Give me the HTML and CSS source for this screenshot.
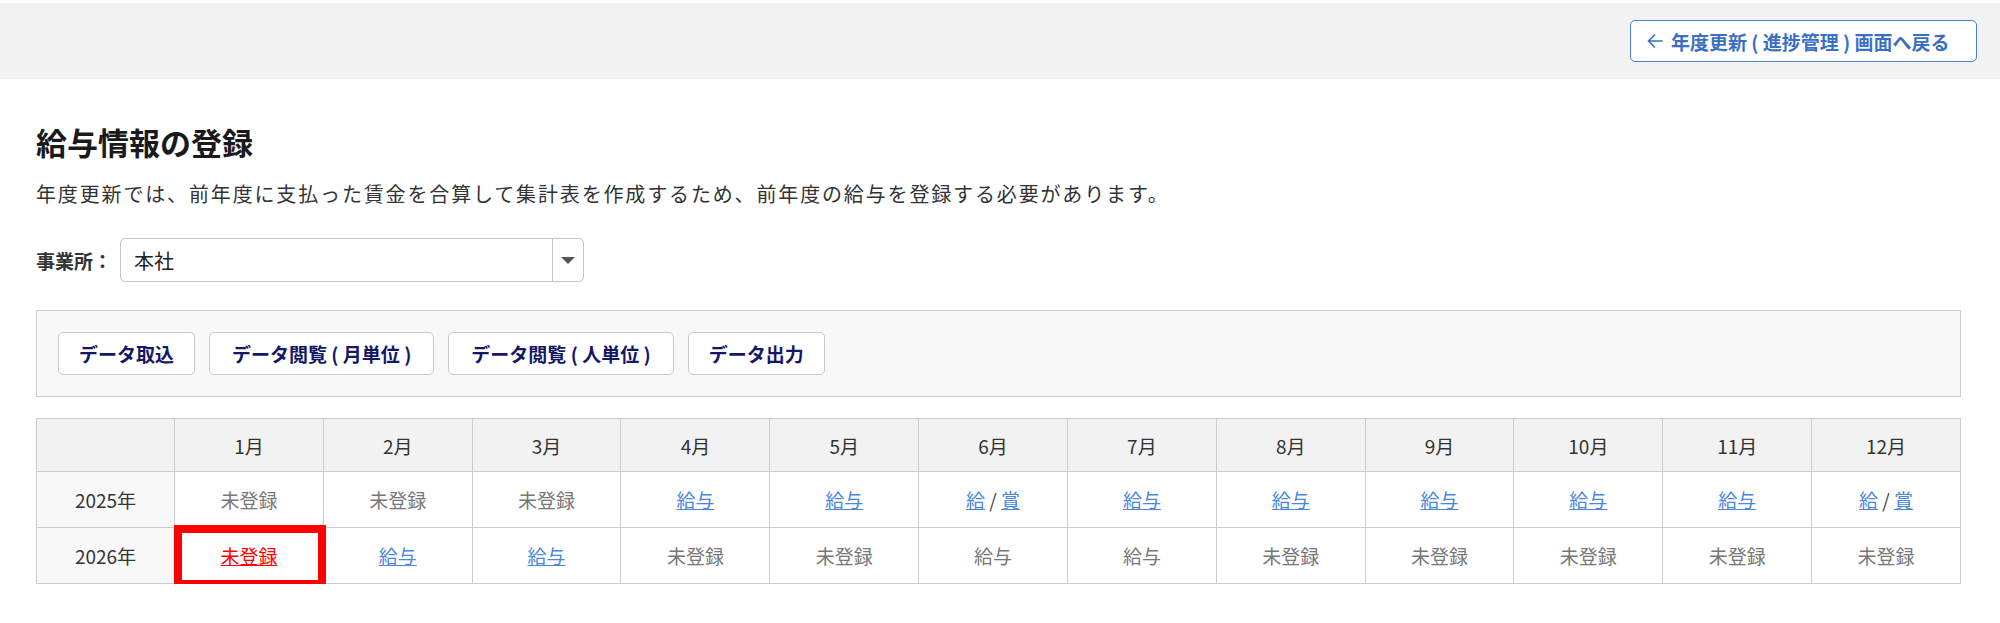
FILE: index.html
```html
<!DOCTYPE html>
<html lang="ja">
<head>
<meta charset="utf-8">
<title>給与情報の登録</title>
<link rel="stylesheet" href="styles.css">
</head>
<body>
<header class="topbar">
  <a class="back-btn" href="#">
    <svg class="back-icon" viewBox="0 0 18 18" width="18" height="18" aria-hidden="true">
      <path d="M16 9H2.5M8.5 3L2.5 9l6 6" fill="none" stroke="currentColor" stroke-width="1.7" stroke-linecap="round" stroke-linejoin="round"/>
    </svg>
    <span>年度更新 ( 進捗管理 ) 画面へ戻る</span>
  </a>
</header>

<main class="content">
  <h1 class="page-title">給与情報の登録</h1>
  <p class="lead">年度更新では、前年度に支払った賃金を合算して集計表を作成するため、前年度の給与を登録する必要があります。</p>

  <div class="office-row">
    <span class="office-label">事業所：</span>
    <div class="select">
      <span class="select-value">本社</span>
      <span class="select-caret"></span>
    </div>
  </div>

  <div class="toolbar">
    <button class="tool-btn">データ取込</button>
    <button class="tool-btn wide">データ閲覧 ( 月単位 )</button>
    <button class="tool-btn wide">データ閲覧 ( 人単位 )</button>
    <button class="tool-btn">データ出力</button>
  </div>

  <table class="months">
    <colgroup>
      <col class="col-year">
      <col span="12">
    </colgroup>
    <thead>
      <tr>
        <th></th>
        <th>1月</th><th>2月</th><th>3月</th><th>4月</th><th>5月</th><th>6月</th>
        <th>7月</th><th>8月</th><th>9月</th><th>10月</th><th>11月</th><th>12月</th>
      </tr>
    </thead>
    <tbody>
      <tr>
        <th class="year">2025年</th>
        <td class="none">未登録</td>
        <td class="none">未登録</td>
        <td class="none">未登録</td>
        <td><a href="#">給与</a></td>
        <td><a href="#">給与</a></td>
        <td><a href="#">給</a><span class="sep"> / </span><a href="#">賞</a></td>
        <td><a href="#">給与</a></td>
        <td><a href="#">給与</a></td>
        <td><a href="#">給与</a></td>
        <td><a href="#">給与</a></td>
        <td><a href="#">給与</a></td>
        <td><a href="#">給</a><span class="sep"> / </span><a href="#">賞</a></td>
      </tr>
      <tr>
        <th class="year">2026年</th>
        <td class="marked"><a class="alert" href="#">未登録</a></td>
        <td><a href="#">給与</a></td>
        <td><a href="#">給与</a></td>
        <td class="none">未登録</td>
        <td class="none">未登録</td>
        <td class="none">給与</td>
        <td class="none">給与</td>
        <td class="none">未登録</td>
        <td class="none">未登録</td>
        <td class="none">未登録</td>
        <td class="none">未登録</td>
        <td class="none">未登録</td>
      </tr>
    </tbody>
  </table>
</main>
</body>
</html>
```

FILE: styles.css
```css
* {
  box-sizing: border-box;
}

html, body {
  margin: 0;
  padding: 0;
  background: #ffffff;
}

body {
  font-family: "Noto Sans CJK JP", "Noto Sans", sans-serif;
  color: #222222;
  padding-top: 3px;
}

/* top bar with the return button */
.topbar {
  height: 76px;
  background: #f2f2f2;
  display: flex;
  align-items: center;
  justify-content: flex-end;
  padding-right: 23px;
}

.back-btn {
  display: flex;
  align-items: center;
  gap: 7px;
  height: 42px;
  width: 347px;
  padding: 0 15px;
  border: 1px solid #4a80d3;
  border-radius: 5px;
  background: #ffffff;
  color: #3b6fc6;
  font-size: 19px;
  font-weight: 700;
  text-decoration: none;
  white-space: nowrap;
}

.back-icon {
  flex: none;
}

/* main content */
.content {
  padding: 0 39px 0 36px;
}

.page-title {
  margin: 44px 0 0;
  font-size: 31px;
  line-height: 37px;
  font-weight: 700;
  color: #1a1a1a;
}

.lead {
  margin: 19px 0 0;
  font-size: 20px;
  line-height: 30px;
  letter-spacing: 1.85px;
  color: #333333;
}

.office-row {
  display: flex;
  align-items: center;
  margin-top: 29px;
  gap: 8px;
}

.office-label {
  font-size: 19px;
  font-weight: 700;
  color: #333333;
}

.select {
  display: flex;
  align-items: stretch;
  width: 464px;
  height: 44px;
  border: 1px solid #c6c6c6;
  border-radius: 5px;
  background: #ffffff;
}

.select-value {
  flex: 1;
  display: flex;
  align-items: center;
  padding-left: 13px;
  font-size: 20px;
  color: #222222;
}

.select-caret {
  width: 31px;
  border-left: 1px solid #c6c6c6;
  display: flex;
  align-items: center;
  justify-content: center;
}

.select-caret::before {
  content: "";
  border-left: 7px solid transparent;
  border-right: 7px solid transparent;
  border-top: 7px solid #555555;
}

/* action buttons panel */
.toolbar {
  margin-top: 28px;
  display: flex;
  gap: 14px;
  padding: 21px 21px;
  background: #f8f8f8;
  border: 1px solid #cccccc;
}

.tool-btn {
  height: 43px;
  padding: 0 20px;
  background: #ffffff;
  border: 1px solid #c8c8c8;
  border-radius: 5px;
  font-family: inherit;
  font-size: 19px;
  font-weight: 700;
  color: #141765;
  white-space: nowrap;
  cursor: pointer;
}

.tool-btn.wide {
  padding: 0 22px;
}

/* monthly registration table */
.months {
  margin-top: 21px;
  width: 100%;
  table-layout: fixed;
  border-collapse: collapse;
  font-size: 19px;
}

.col-year {
  width: 138px;
}

.months th,
.months td {
  border: 1px solid #cccccc;
  text-align: center;
  vertical-align: middle;
  padding: 0;
}

.months thead tr {
  height: 53px;
}

.months tbody tr {
  height: 56px;
}

.months thead th {
  background: #f2f2f2;
  font-weight: 400;
  color: #333333;
}

.months th.year {
  background: #f8f8f8;
  font-weight: 400;
  color: #333333;
}

.months td {
  background: #ffffff;
  color: #666666;
}

.months td.none {
  color: #777777;
}

.months a {
  color: #4a86df;
  text-decoration: underline;
}

.months .sep {
  color: #444444;
}

.months a.alert {
  color: #ff0000;
}

/* emphasis frame drawn over the cell */
.months td.marked {
  position: relative;
}

.months td.marked::after {
  content: "";
  position: absolute;
  top: -3px;
  left: -1px;
  right: -3px;
  bottom: -5px;
  border: 8px solid #ff0000;
  pointer-events: none;
}
```
